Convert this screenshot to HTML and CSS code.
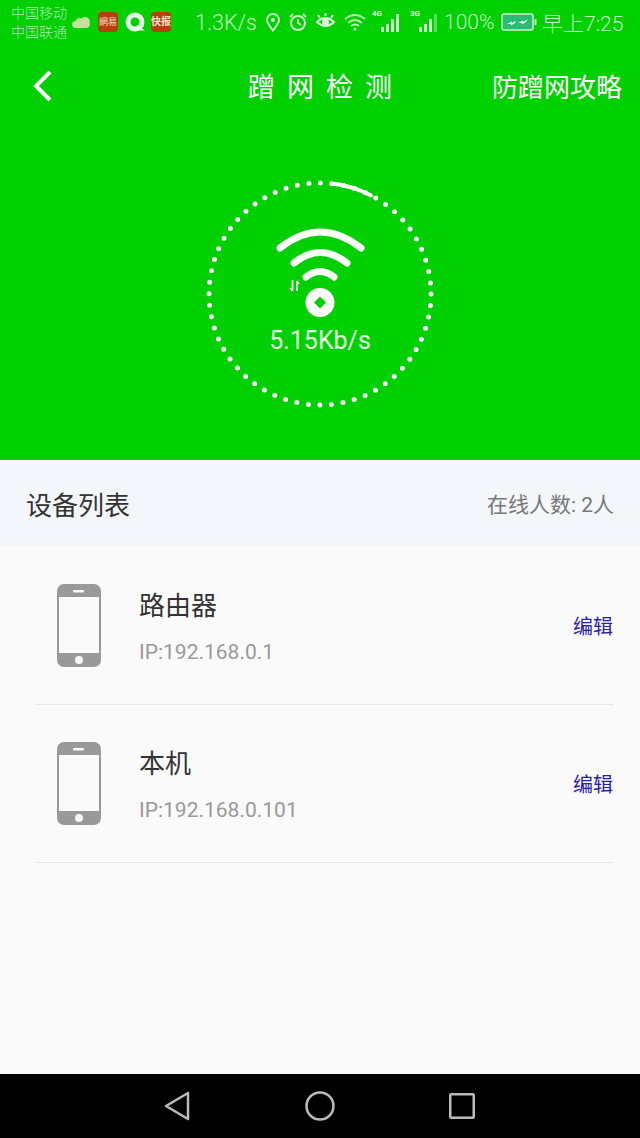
FILE: index.html
```html
<!DOCTYPE html>
<html lang="zh-CN">
<head>
  <meta charset="UTF-8" />
  <title>蹭网检测</title>
  <link rel="stylesheet" href="styles.css">
</head>
<body>
  <div class="page">
    <!-- 顶部绿色区域 -->
    <section class="hero">
      <div class="statusbar">
        <div class="carrier"><span>中国移动</span><span>中国联通</span></div>
        <svg class="st-cloud" width="18" height="14" viewBox="0 0 18 14"><path d="M4 13a3.500 3.500 0 0 1-.6-7A5 5 0 0 1 10 3.400 4.500 4.500 0 0 1 17.500 8 3.500 3.500 0 0 1 14.500 13z" fill="#c9dfa0"/></svg>
        <span class="app app-wy">網易</span>
        <svg class="st-q" width="21" height="20" viewBox="0 0 21 20"><circle cx="10" cy="10" r="7" fill="none" stroke="#e6f8e6" stroke-width="5"/><path d="M12 13l8 5.500h-9z" fill="#e6f8e6"/></svg>
        <span class="app app-kb">快报</span>
        <span class="st-speed">1.3K/s</span>
        <svg class="st-loc" width="16" height="20" viewBox="0 0 16 20"><path d="M8 18.500C4 13.500 2 10.500 2 8a6 6 0 0 1 12 0c0 2.500-2 5.500-6 10.500z" fill="none" stroke="#c8f3c8" stroke-width="2"/><circle cx="8" cy="8" r="2" fill="#c8f3c8"/></svg>
        <svg class="st-alarm" width="20" height="20" viewBox="0 0 20 20" fill="none" stroke="#c8f3c8" stroke-width="2"><circle cx="10" cy="11" r="7"/><path d="M10 7v4l3 2M2 5l3-3M18 5l-3-3"/></svg>
        <svg class="st-eye" width="21" height="18" viewBox="0 0 21 18" fill="none" stroke="#dcf8dc" stroke-width="2"><path d="M2 9q8.500-8 17 0q-8.500 8-17 0z"/><circle cx="10.500" cy="9" r="2.500" fill="#dcf8dc"/><path d="M3 2l2 3M18 2l-2 3M10.500 0v3"/></svg>
        <svg class="st-wifi" width="22" height="18" viewBox="0 0 22 18" fill="none" stroke="#b4edb4" stroke-width="2"><path d="M1 6q10-8 20 0M4 10q7-6 14 0M7 13q4-3 8 0"/><circle cx="11" cy="16" r="1.500" fill="#b4edb4" stroke="none"/></svg>
        <div class="signal"><small>4G</small><i class="b1"></i><i class="b2"></i><i class="b3"></i><i class="b4"></i></div>
        <div class="signal signal-3g"><small>3G</small><i class="b1"></i><i class="b2"></i><i class="b3"></i><i class="b4 dim"></i></div>
        <span class="st-pct">100%</span>
        <svg class="st-batt" width="36" height="18" viewBox="0 0 36 18"><rect x="1" y="1" width="31" height="16" rx="2" fill="#2cbb74" stroke="#c8f3c8" stroke-width="1.500"/><rect x="33.500" y="6" width="2" height="6" fill="#c8f3c8"/><path d="M6 11l5-2.500v1.500l4-2.500-1 2.500-4 2.500v-1.500zM17 10l5-2.500v1.500l5-3-2 3-4 2.500v-1.500z" fill="#e6f8e6"/></svg>
        <span class="st-time">早上7:25</span>
      </div>

      <div class="titlebar">
        <svg class="back" width="24" height="34" viewBox="0 0 24 34"><path d="M19 3L5 17l14 14" fill="none" stroke="#fff" stroke-width="4"/></svg>
        <h1>蹭网检测</h1>
        <a class="guide">防蹭网攻略</a>
      </div>

      <div class="ring">
        <svg width="240" height="240" viewBox="0 0 240 240">
          <circle class="dots" cx="120" cy="120" r="111"/>
          <path class="arc" d="M131.600 9.600A111 111 0 0 1 171 21.500"/>
          <g class="wifi">
            <path d="M80 74Q120 42 161 74"/>
            <path d="M94 89Q120 68 147 89"/>
            <path d="M106 103Q120 92 134 103"/>
          </g>
          <path class="updown" d="M92.500 106v11M92.500 117l-2.500-3M97 117v-10M97 107l2 3"/>
          <circle cx="120" cy="128.500" r="14.500" fill="#fff"/>
          <path d="M120 122.500l6 6-6 6-6-6z" fill="#00d000"/>
        </svg>
        <div class="speed">5.15Kb/s</div>
      </div>
    </section>

    <!-- 设备列表 -->
    <div class="listhead">
      <h2>设备列表</h2>
      <span class="online">在线人数: 2人</span>
    </div>

    <main class="devices">
      <div class="device">
        <svg class="phone" width="44" height="83" viewBox="0 0 44 83">
          <rect width="44" height="83" rx="7" fill="#999"/>
          <rect x="2" y="13" width="40" height="56" fill="#fafafa"/>
          <rect x="16" y="6" width="11" height="2.500" rx="1" fill="#fafafa"/>
          <circle cx="22" cy="76" r="4" fill="#fafafa"/>
        </svg>
        <div class="info">
          <div class="name">路由器</div>
          <div class="ip">IP:192.168.0.1</div>
        </div>
        <a class="edit">编辑</a>
      </div>
      <div class="device">
        <svg class="phone" width="44" height="83" viewBox="0 0 44 83">
          <rect width="44" height="83" rx="7" fill="#999"/>
          <rect x="2" y="13" width="40" height="56" fill="#fafafa"/>
          <rect x="16" y="6" width="11" height="2.500" rx="1" fill="#fafafa"/>
          <circle cx="22" cy="76" r="4" fill="#fafafa"/>
        </svg>
        <div class="info">
          <div class="name">本机</div>
          <div class="ip">IP:192.168.0.101</div>
        </div>
        <a class="edit">编辑</a>
      </div>
    </main>

    <!-- 导航栏 -->
    <nav class="navbar">
      <svg width="26" height="30" viewBox="0 0 26 30"><path d="M24 2v26L2 15z" fill="none" stroke="#bbb" stroke-width="2.500" stroke-linejoin="round"/></svg>
      <svg width="30" height="30" viewBox="0 0 30 30"><circle cx="15" cy="15" r="13.500" fill="none" stroke="#bbb" stroke-width="2.500"/></svg>
      <svg class="nav-recent" width="26" height="26" viewBox="0 0 26 26"><rect x="1.250" y="1.250" width="23.500" height="23.500" rx="1" fill="none" stroke="#bbb" stroke-width="2.500"/></svg>
    </nav>
  </div>
</body>
</html>
```

FILE: styles.css
```css
body { margin: 0; font-family: Roboto, "Noto Sans CJK SC", sans-serif; }
h1, h2 { margin: 0; font-weight: 400; }

.page { width: 640px; height: 1138px; display: flex; flex-direction: column; overflow: hidden; background: #fafafa; }

/* hero */
.hero { height: 460px; background: #00d000; color: #fff; flex: none; }

.statusbar { height: 44px; display: flex; align-items: center; color: #c8f3c8; font-size: 21px; font-weight: 300; white-space: nowrap; }
.carrier { display: flex; flex-direction: column; margin-left: 11px; width: 57px; font-size: 14px; line-height: 19px; color: #a9ecb0; padding-top: 1px; }
.st-cloud { margin-left: 4px; }
.app { width: 20px; height: 20px; border-radius: 4px; background: #b5400e; color: #f5e3c8; font-size: 9px; line-height: 20px; text-align: center; font-weight: 400; overflow: hidden; }
.app-wy { margin-left: 8px; }
.st-q { margin-left: 7px; }
.app-kb { margin-left: 5px; font-size: 10px; font-weight: 700; }
.st-speed { margin-left: 24px; width: 63px; font-size: 21.500px; }
.st-loc { margin-left: 7px; }
.st-alarm { margin-left: 7px; }
.st-eye { margin-left: 7px; }
.st-wifi { margin-left: 8px; }
.signal { margin-left: 5px; width: 32px; height: 20px; display: flex; align-items: flex-end; gap: 2px; position: relative; padding-left: 10px; box-sizing: border-box; }
.signal small { position: absolute; left: 1px; top: -3px; font-size: 8px; font-weight: 700; color: #dcf8dc; }
.signal i { display: block; width: 3px; background: #c8f3c8; }
.signal-3g { margin-left: 6px; }
.signal .dim { opacity: .45; }
.b1 { height: 5px; }
.b2 { height: 8px; }
.b3 { height: 13px; }
.b4 { height: 18px; }
.st-pct { margin-left: 3px; width: 51px; }
.st-batt { margin-left: 6px; }
.st-time { margin-left: 5px; }

.titlebar { height: 83px; display: grid; grid-template-columns: 1fr auto 1fr; align-items: center; padding: 0 18px; }
.titlebar h1 { font-size: 27px; letter-spacing: 12px; margin-right: -12px; }
.back { display: block; margin-left: 13px; }
.guide { justify-self: end; font-size: 26px; }

.ring { display: grid; width: 240px; height: 240px; margin: 47px auto 0; }
.ring svg, .speed { grid-area: 1 / 1; }
.dots { fill: none; stroke: #fff; stroke-width: 5; stroke-linecap: round; stroke-dasharray: 0 11.620; }
.arc { fill: none; stroke: #fff; stroke-width: 4; stroke-linecap: round; }
.wifi path { fill: none; stroke: #fff; stroke-width: 7; stroke-linecap: round; }
.updown { fill: none; stroke: #fff; stroke-width: 1.600; }
.speed { padding-top: 153px; text-align: center; font-size: 25px; line-height: 28px; color: #e8fbe8; }

/* list */
.listhead { height: 86px; background: #f3f6fa; display: flex; align-items: center; justify-content: space-between; padding: 0 26px; flex: none; }
.listhead h2 { font-size: 26px; color: #333; }
.online { font-size: 21px; color: #777; }

.devices { flex: 1; padding-top: 1px; }
.device { height: 157px; margin: 0 26px 0 36px; border-bottom: 1px solid #e6e6e6; display: flex; align-items: center; }
.phone { margin-left: 21px; flex: none; }
.info { margin-left: 38px; padding-top: 3px; flex: 1; }
.name { font-size: 26px; line-height: 36px; color: #333; }
.ip { margin-top: 14px; font-size: 21px; line-height: 28px; color: #999; }
.edit { font-size: 20px; color: #2a20a8; margin-right: 1px; }

.navbar { height: 64px; background: #000; display: flex; align-items: center; justify-content: center; gap: 115px; padding-right: 1px; flex: none; }
.nav-recent { margin-left: -1px; }
```
